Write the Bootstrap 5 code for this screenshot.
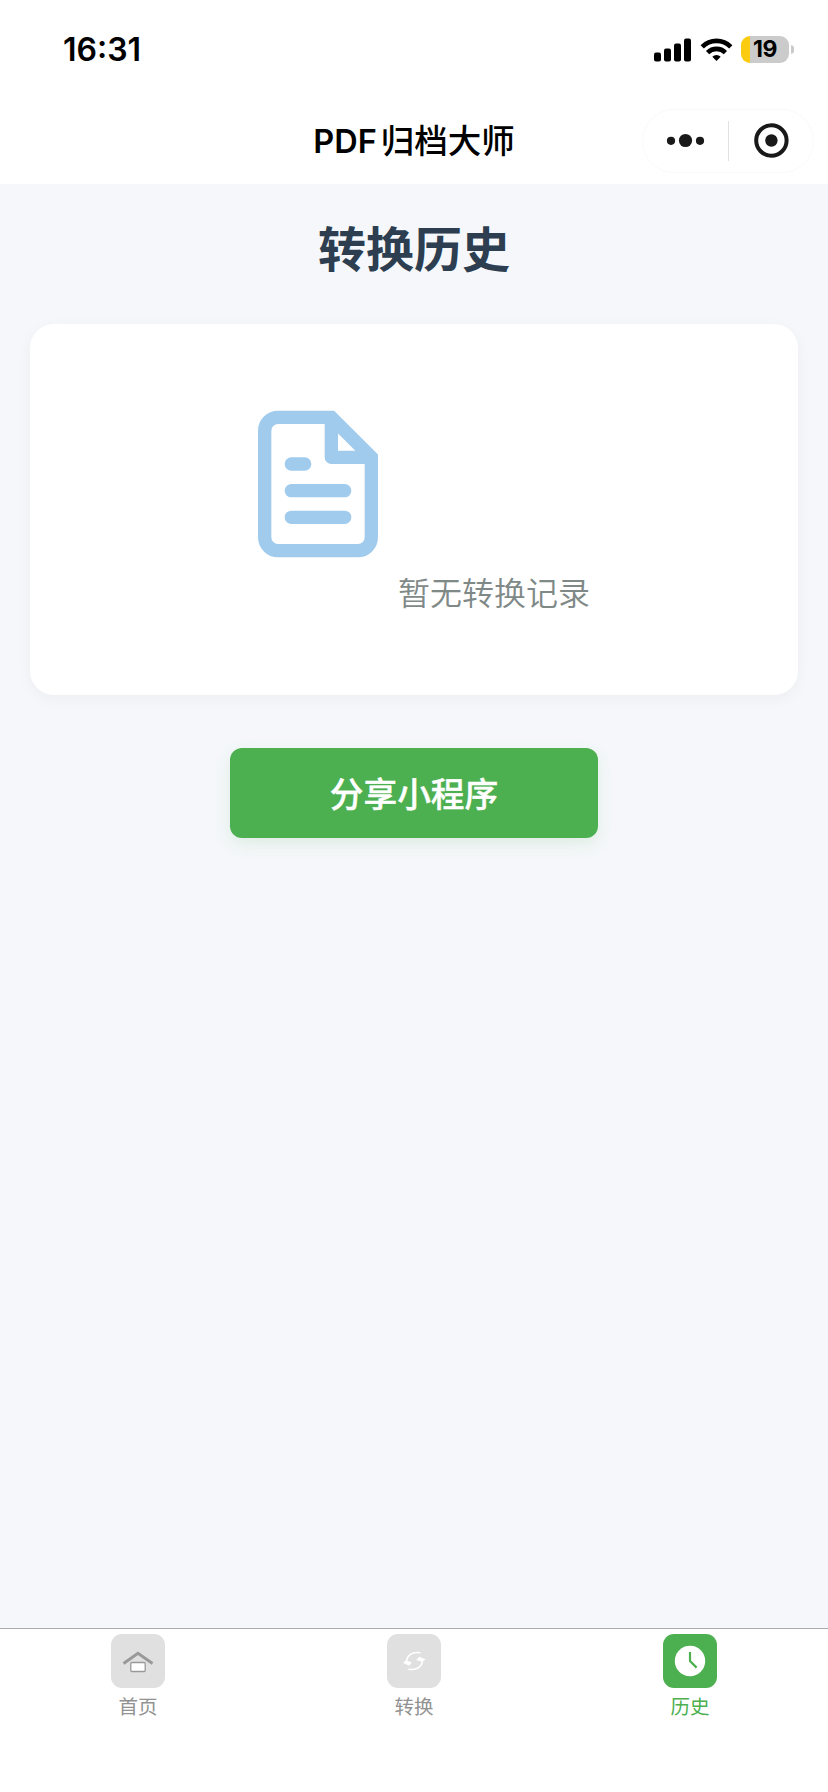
<!DOCTYPE html>
<html lang="zh-CN">
<head>
<meta charset="utf-8">
<meta name="viewport" content="width=device-width, initial-scale=1">
<title>PDF归档大师</title>
<link href="https://cdn.jsdelivr.net/npm/bootstrap@5.3.0/dist/css/bootstrap.min.css" rel="stylesheet">
<style>
body{font-family:Inter,"Noto Sans CJK SC",sans-serif;background:#f5f7fa;color:#000;height:1792px;overflow:hidden}
svg{display:block;flex:none}
.status-bar{height:99px;padding:0 34px 0 63px}
.clock{font-size:32px;line-height:40px;font-weight:600;letter-spacing:0;padding-top:1px}
.battery{width:48px;height:27px;border-radius:9px;background:linear-gradient(90deg,#fbcb0f 9px,#cbcbcb 9px);font-size:23px;font-weight:700;letter-spacing:-.4px;line-height:27px}
.battery-tip{margin-left:2px}
.title-bar{height:85px;display:grid;grid-template-columns:1fr auto 1fr}
.title-text{font-size:33.5px;line-height:48px;font-weight:500}
.latin{font-size:32.5px;font-weight:600;margin-right:4px}
.capsule{width:172px;height:64px;border:1px solid #fafafa;border-radius:32px;margin:0 14px 2px 0}
.page-title{font-family:"Noto Sans CJK SC",sans-serif;font-size:48px;line-height:64px;font-weight:700;color:#2c3e50;margin:30px 0 46px}
.empty-card{height:371px;margin:0 30px;border:0;border-radius:24px;box-shadow:0 4px 16px rgba(0,0,0,.04)}
.doc-icon{margin-bottom:51px}
.empty-text{font-family:"Noto Sans CJK SC",sans-serif;font-size:32px;line-height:48px;color:#7f8987;font-weight:350}
.share-btn{width:368px;height:90px;margin-top:53px;border:0;border-radius:12px;background:#4caf50;color:#fff;font-family:"Noto Sans CJK SC",sans-serif;font-size:33.7px;font-weight:500;-webkit-text-stroke:.4px #fff;box-shadow:0 6px 16px rgba(76,175,80,.13)}
.tab-bar{height:164px;border-top:1px solid #a9abad}
.tab-item{font-family:"Noto Sans CJK SC",sans-serif;font-size:19.5px;line-height:28px;color:#929292;padding-top:5px}
.tab-item.active{color:#4caf50}
.tab-item svg{margin-bottom:4px}
</style>
</head>
<body class="d-flex flex-column">
<header class="bg-white">
  <div class="status-bar d-flex align-items-center justify-content-between">
    <span class="clock">16:31</span>
    <div class="d-flex align-items-center">
      <svg width="38" height="24" viewBox="0 0 38 24"><rect y="14.5" width="7" height="9" rx="2"/><rect x="10" y="10.5" width="7" height="13" rx="2"/><rect x="20" y="5.5" width="7" height="18" rx="2"/><rect x="30" y=".5" width="7" height="23" rx="2"/></svg>
      <svg class="ms-2" width="33" height="25" viewBox="0 0 33 25"><path fill="none" stroke="#000" stroke-width="4.6" d="M2.2 9.8a20.2 20.2 0 0 1 28.6 0M7.6 15.6a12.6 12.6 0 0 1 17.8 0"/><path d="M12.3 19.7a6 6 0 0 1 8.4 0l-4.2 4.4z"/></svg>
      <div class="battery text-center ms-2">19</div>
      <svg class="battery-tip" width="3" height="9" viewBox="0 0 3 9"><path fill="#cbcbcb" d="M0 0a4.6 4.6 0 0 1 0 9z"/></svg>
    </div>
  </div>
  <nav class="title-bar align-items-center">
    <span></span>
    <div class="title-text text-nowrap"><span class="latin">PDF</span>归档大师</div>
    <div class="capsule d-flex align-items-center ms-auto">
      <svg width="170" height="62" viewBox="643 109 170 62"><g fill="#191919"><circle cx="671" cy="139.8" r="4.1"/><circle cx="685.5" cy="139.5" r="6.6"/><circle cx="700" cy="139.8" r="4.1"/><circle cx="771.4" cy="139.5" r="6.2"/></g><circle cx="771.4" cy="139.5" r="15.2" fill="none" stroke="#191919" stroke-width="4"/><path stroke="#e2e2e2" d="M728.5 120v40"/></svg>
    </div>
  </nav>
</header>
<main class="flex-grow-1">
  <h1 class="page-title text-center">转换历史</h1>
  <section class="card empty-card flex-row align-items-center justify-content-center">
    <div class="d-flex align-items-end">
      <svg class="doc-icon" width="160" height="160" viewBox="0 0 24 24" fill="none" stroke="#a0cbed" stroke-width="2"><path d="M14 2H6a2 2 0 0 0-2 2v16a2 2 0 0 0 2 2h12a2 2 0 0 0 2-2V8z"/><path stroke-linejoin="round" d="M14 2v6h6"/><path stroke-linecap="round" d="M8 9h2M8 13h8M8 17h8"/></svg>
      <span class="empty-text">暂无转换记录</span>
    </div>
  </section>
  <button type="button" class="btn share-btn d-flex align-items-center justify-content-center mx-auto">分享小程序</button>
</main>
<nav class="tab-bar row g-0 bg-white">
  <div class="tab-item col d-flex flex-column align-items-center">
    <svg width="54" height="54" viewBox="0 0 54 54"><rect width="54" height="54" rx="11" fill="#e0e0e0"/><path d="m12.5 29.5 14.5-10.3 14.5 10.3" fill="none" stroke="#999" stroke-width="2.9"/><rect x="19.8" y="28.5" width="14.4" height="9" rx="1" fill="#fff" stroke="#999" stroke-width="1.3"/></svg>
    <span>首页</span>
  </div>
  <div class="tab-item col d-flex flex-column align-items-center">
    <svg width="54" height="54" viewBox="0 0 54 54"><rect width="54" height="54" rx="11" fill="#e0e0e0"/><path d="M19.5 27.5c.5-6 5.5-10 13.5-8.8M35.5 26.5c-.5 6-5.5 10-13.5 8.8" fill="none" stroke="#fff" stroke-width="1.6" stroke-linecap="round"/><path fill="#fff" d="m16 28.8 3-2.6 5.8 2.3-2.6 3.2zM38.5 25.2l-3 2.6-6.3-1.8 3-3.3z"/></svg>
    <span>转换</span>
  </div>
  <div class="tab-item active col d-flex flex-column align-items-center">
    <svg width="54" height="54" viewBox="0 0 54 54"><rect width="54" height="54" rx="11" fill="#4caf50"/><circle cx="27" cy="27" r="15.2" fill="#fff"/><path d="M27 18v9l6.6 6.6" fill="none" stroke="#4caf50" stroke-width="2.2"/></svg>
    <span>历史</span>
  </div>
</nav>
<script src="https://cdn.jsdelivr.net/npm/bootstrap@5.3.0/dist/js/bootstrap.bundle.min.js"></script>
</body>
</html>
